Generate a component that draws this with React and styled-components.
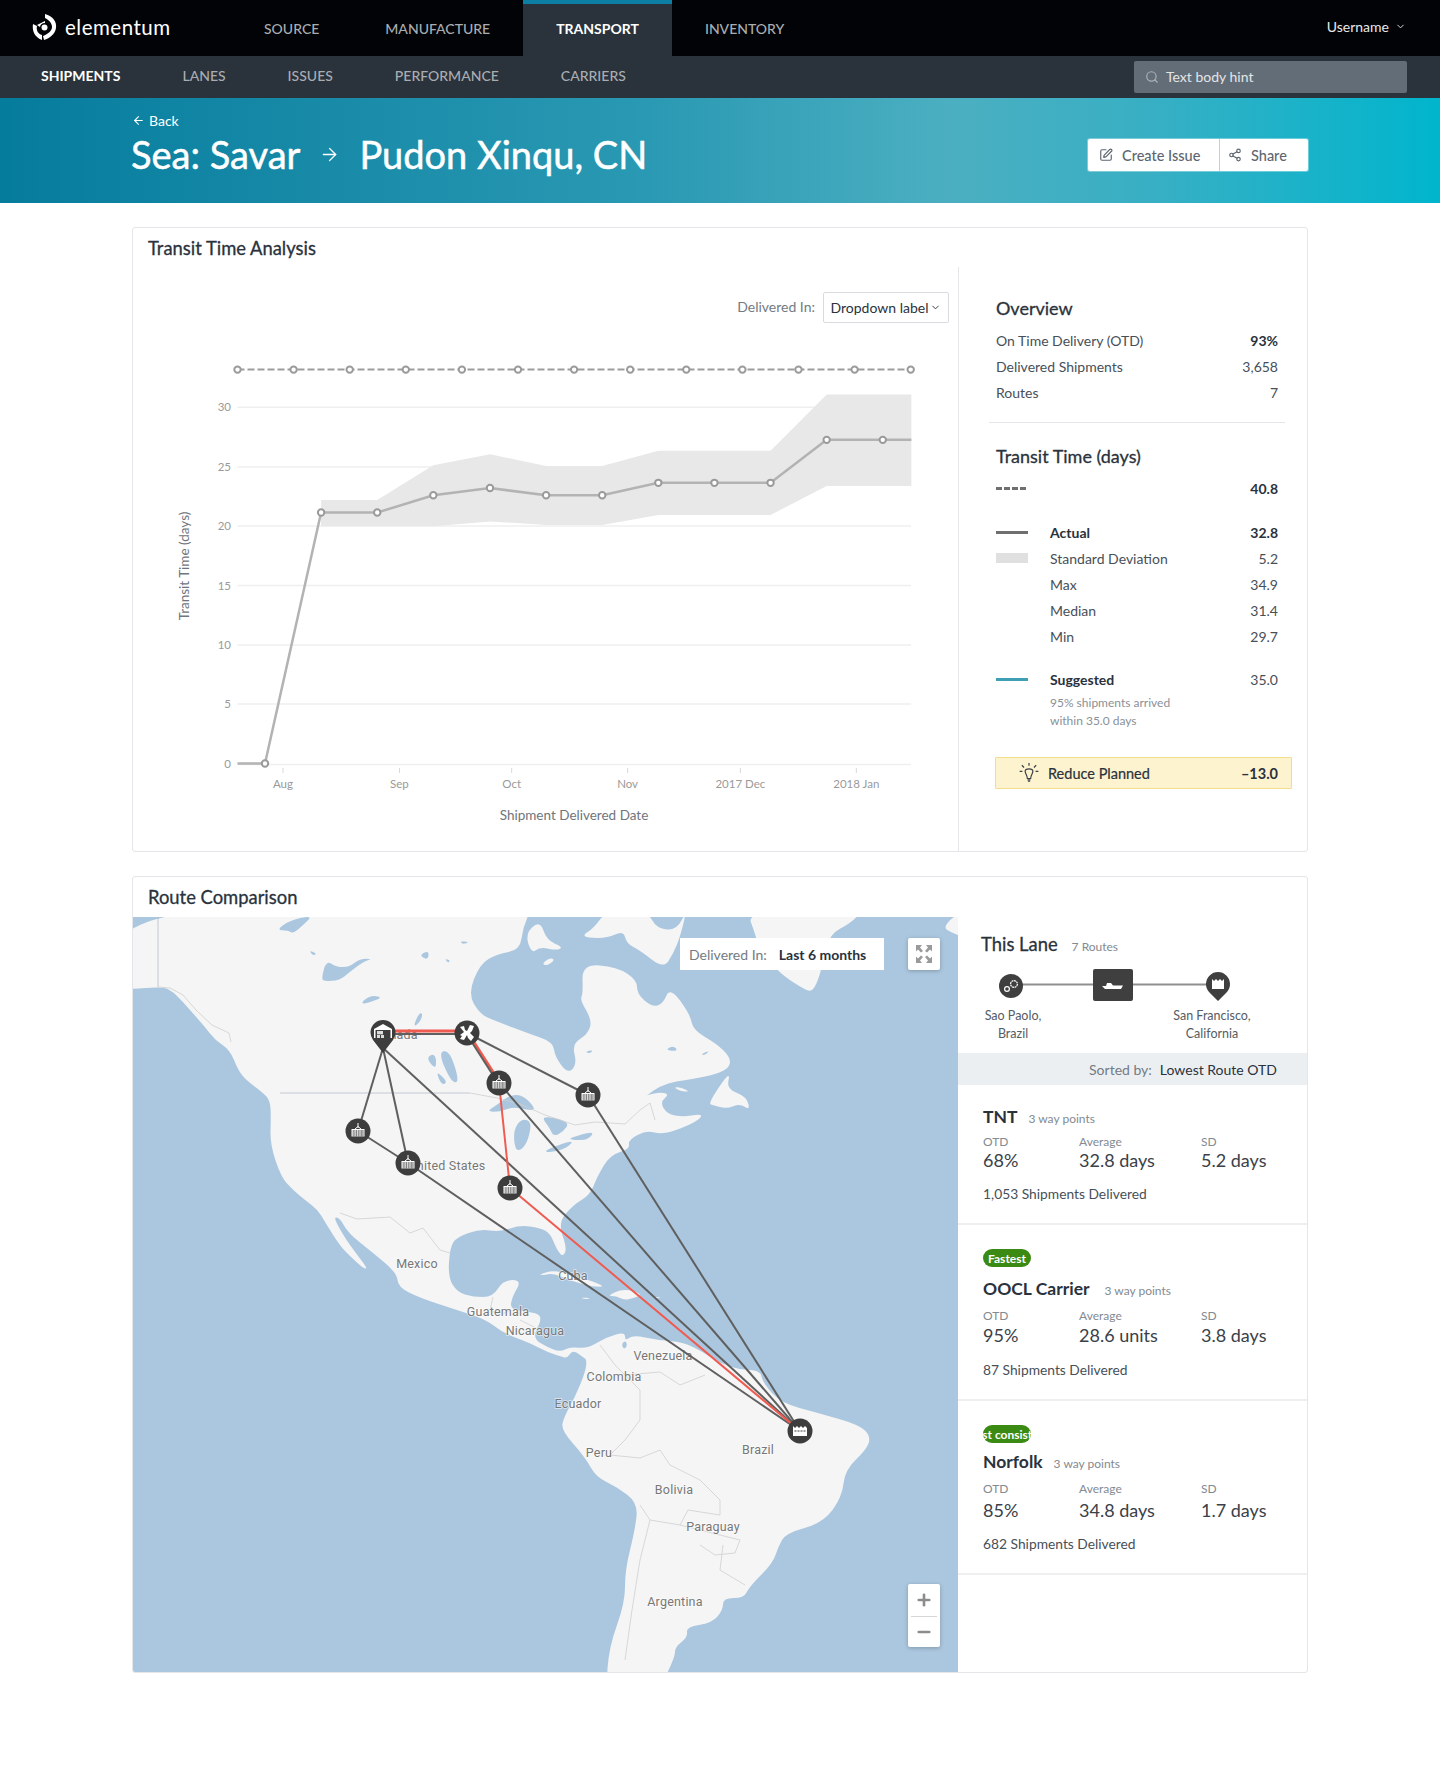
import styled, { createGlobalStyle } from "styled-components";
import {
  ArrowLeft,
  ArrowRight,
  ChevronDown,
  Search,
  SquarePen,
  Share2,
  Plus,
  Minus,
} from "lucide-react";

const GlobalStyle = createGlobalStyle`
  * { box-sizing: border-box; }
  html, body { margin: 0; padding: 0; background: #fff; }
  body {
    font-family: "Lato", "Liberation Sans", sans-serif;
    color: #2a323c;
    min-height: 1765px;
  }
`;

// chart data is read off the picture, in page pixels
const chartX = (z) => 130 + z / 1.889;
const chartY = (z) => 225 + z / 2.49;
const toPoints = (list) => list.map(([x, y]) => `${chartX(x)},${chartY(y)}`).join(" ");

const dashedXs = Array.from({ length: 13 }, (_, i) => 237.5 + i * 56.1);
const gridLines = [
  { label: "30", y: 407.3 },
  { label: "25", y: 467 },
  { label: "20", y: 526 },
  { label: "15", y: 585.6 },
  { label: "10", y: 645 },
  { label: "5", y: 704 },
  { label: "0", y: 764.4 },
];
const areaTop = [[361,685],[467,685],[573,598],[680,571],[786,600],[892,600],[998,562],[1104,562],[1210,562],[1316,422],[1422,422],[1476,422]];
const areaBottom = [[1476,650],[1422,650],[1316,650],[1210,722],[1104,722],[998,722],[892,747],[786,747],[680,738],[573,750],[467,750],[361,750]];
const actualLine = [[203,1341],[255,1341],[361,716],[467,716],[573,673],[680,655],[786,673],[892,673],[998,642],[1104,642],[1210,642],[1316,535],[1422,535],[1476,535]];
const months = [
  { label: "Aug", z: 289 },
  { label: "Sep", z: 509 },
  { label: "Oct", z: 721 },
  { label: "Nov", z: 940 },
  { label: "2017 Dec", z: 1153 },
  { label: "2018 Jan", z: 1372 },
];

const mainLand = "120,989 133,989 158,987 170,989 183,1002 190,1010 205,1027 215,1040 230,1050 238,1070 246,1080 262,1092 270,1100 271,1117 270,1144 281,1177 293,1190 305,1200 318,1210 325,1222 340,1246 352,1258 363,1268 368,1269 355,1252 345,1238 333,1217 340,1218 348,1233 372,1252 397,1273 398,1287 420,1298 457,1310 487,1320 503,1333 530,1343 547,1352 563,1357 567,1358 573,1350 583,1357 587,1360 585,1373 575,1397 564,1417 561,1430 585,1457 596,1477 617,1487 638,1503 635,1530 625,1570 625,1603 609,1647 606,1690 659,1690 675,1657 675,1647 688,1637 686,1627 712,1623 723,1610 723,1598 744,1598 749,1587 773,1563 778,1547 786,1533 823,1523 842,1497 845,1470 866,1450 871,1437 860,1425 818,1413 781,1403 763,1383 760,1370 740,1370 720,1363 703,1352 683,1342 657,1340 633,1335 625,1341 625,1332 607,1337 590,1347 580,1348 570,1347 560,1352 547,1347 532,1338 543,1317 533,1312 510,1310 512,1297 522,1280 503,1280 493,1297 473,1297 457,1292 448,1277 450,1247 457,1237 480,1229 500,1232 520,1225 540,1228 550,1233 557,1250 563,1257 567,1248 558,1223 573,1205 590,1195 597,1177 610,1155 630,1149 628,1140 647,1130 662,1135 690,1125 702,1117 700,1114 683,1117 667,1114 660,1102 670,1094 657,1092 637,1099 630,1110 660,1084 693,1079 717,1074 730,1067 730,1057 717,1044 693,1030 690,1014 670,987 663,1004 652,1007 637,994 637,980 617,967 582,964 583,994 580,1000 592,1020 588,1034 572,1044 577,1064 568,1074 555,1057 553,1042 530,1034 493,1020 480,1014 468,994 480,964 497,954 520,950 523,927 533,905 120,905"
  .split(" ")
  .map((pair) => pair.split(",").map(Number));

// [origin x, origin y, outline at 3x], taken from crops of the map
const shift = (ox, oy, list) => list.map(([x, y]) => [ox + x / 3, oy + y / 3]);
const middle = (a, b) => `${(a[0] + b[0]) / 2},${(a[1] + b[1]) / 2}`;
// rounds a coarse outline so coasts do not look like cut paper
const smooth = (list) => {
  const last = list.length - 1;
  let d = `M${middle(list[last], list[0])}`;
  list.forEach((point, i) => {
    d += ` Q${point[0]},${point[1]} ${middle(point, list[i === last ? 0 : i + 1])}`;
  });
  return `${d} Z`;
};
const islands = [
  [460, 917, [[195,50],[240,10],[260,70],[310,90],[290,100],[240,90],[215,110]]],
  [460, 917, [[360,60],[400,35],[440,-20],[560,-20],[590,35],[650,40],[680,-20],[660,60],[640,110],[610,155],[540,100],[500,80],[490,40],[440,65]]],
  [460, 917, [[860,-20],[885,50],[900,100],[960,170],[1030,215],[1055,225],[1075,190],[1090,130],[1110,50],[1170,20],[1210,-20]]],
  [460, 917, [[1450,30],[1490,-10],[1520,0],[1510,60],[1470,45]]],
  [460, 917, [[745,560],[790,490],[810,470],[800,515],[860,540],[870,580],[840,560],[800,575],[760,565]]],
  [460, 917, [[640,510],[665,512],[690,525],[660,522]]],
  [460, 917, [[245,140],[270,122],[285,128],[262,146]]],
  [340, 1170, [[595,315],[640,300],[690,315],[760,335],[795,350],[760,350],[700,335],[640,310],[610,315]]],
  [340, 1170, [[800,378],[850,355],[910,372],[880,385],[850,390],[830,378]]],
  [340, 1170, [[720,382],[755,385],[735,388]]],
  [340, 1170, [[945,380],[965,383],[950,385]]],
];
const lakes = [
  [133, 917, [[430,40],[470,10],[540,-5],[510,25],[480,50],[465,40]]],
  [133, 917, [[565,185],[580,130],[610,150],[650,150],[680,125],[720,125],[690,135],[650,165],[620,190],[575,193]]],
  [133, 917, [[680,262],[710,235],[750,240],[715,255]]],
  [133, 917, [[840,330],[858,288],[870,290],[860,318]]],
  [133, 917, [[915,405],[950,400],[980,495],[955,497]]],
  [133, 917, [[878,422],[908,408],[910,460]]],
  [133, 917, [[908,460],[945,495],[925,505]]],
  [133, 917, [[858,115],[888,100],[885,130]]],
  [133, 917, [[528,100],[552,110],[540,116]]],
  [133, 917, [[980,72],[1010,75],[990,82]]],
  [133, 917, [[935,125],[952,130],[945,138]]],
  [340, 1000, [[440,335],[470,315],[510,285],[550,285],[590,330],[560,330],[520,320],[480,335]]],
  [340, 1000, [[520,390],[545,355],[575,365],[565,420],[545,450],[525,450]]],
  [340, 1000, [[600,345],[690,365],[670,395],[640,410],[630,385]]],
  [340, 1000, [[610,452],[705,418],[680,445],[630,458]]],
  [340, 1000, [[685,415],[765,392],[745,420],[700,420]]],
  [460, 917, [[375,405],[400,398],[390,410]]],
  [460, 917, [[615,400],[640,385],[655,402]]],
  [460, 917, [[722,412],[750,400],[735,415]]],
  [340, 1170, [[845,520],[858,512],[862,530],[850,538]]],
  [130, 1270, [[1078,403],[1088,408],[1080,412]]],
  [130, 1270, [[952,635],[968,645],[960,655]]],
];
const borders = [
  { points: "158,917 158,987", strong: true },
  { points: "158,987 170,988 183,995 196,1010 212,1025 229,1033 231,1042" },
  { points: "280,1093 470,1093", strong: true },
  { points: "470,1093 497,1098 520,1104" },
  { points: "520,1104 545,1115 575,1125 595,1122 625,1124 640,1110 650,1103 655,1120" },
  { points: "340,1213 357,1219 390,1217 410,1233 423,1228 440,1250 450,1253" },
  { points: "493,1297 490,1310 500,1315 510,1310" },
  { points: "520,1320 540,1330" },
  { points: "600,1345 615,1365 625,1375 640,1390 640,1420 625,1440 610,1455 640,1458" },
  { points: "625,1375 660,1372 680,1385 705,1375" },
  { points: "640,1458 660,1450 670,1465 700,1480 720,1500 720,1515 688,1510 680,1525" },
  { points: "640,1505 650,1520 680,1525 700,1530 740,1540 735,1553 715,1555 700,1545" },
  { points: "650,1520 640,1560 632,1610 625,1660" },
  { points: "723,1545 720,1570 745,1585" },
];
const mapLabels = [
  { text: "Canada", x: 396, y: 1035 },
  { text: "United States", x: 447, y: 1166 },
  { text: "Mexico", x: 417, y: 1264 },
  { text: "Cuba", x: 573, y: 1276 },
  { text: "Guatemala", x: 498, y: 1312 },
  { text: "Nicaragua", x: 535, y: 1331 },
  { text: "Venezuela", x: 663, y: 1356 },
  { text: "Colombia", x: 614, y: 1377 },
  { text: "Ecuador", x: 578, y: 1404 },
  { text: "Peru", x: 599, y: 1453 },
  { text: "Brazil", x: 758, y: 1450 },
  { text: "Bolivia", x: 674, y: 1490 },
  { text: "Paraguay", x: 713, y: 1527 },
  { text: "Argentina", x: 675, y: 1602 },
];
const hub = { x: 467, y: 1033 };
const pinTip = { x: 383, y: 1048 };
const stopA = { x: 499, y: 1083 };
const stopB = { x: 588, y: 1095 };
const stopC = { x: 358, y: 1131 };
const stopD = { x: 408, y: 1163 };
const stopE = { x: 510, y: 1188 };
const plant = { x: 800, y: 1431 };
const greyRoutes = [
  [pinTip, stopC],
  [pinTip, stopD],
  [stopC, stopD],
  [stopD, plant],
  [pinTip, plant],
  [hub, stopB],
  [stopA, plant],
  [stopB, plant],
];
const redRoutes = [
  [stopA, stopE],
  [stopE, plant],
];

const routes = [
  {
    name: "TNT",
    points: "3 way points",
    otd: "68%",
    average: "32.8 days",
    sd: "5.2 days",
    delivered: "1,053 Shipments Delivered",
    top: 22,
    hintGap: 11,
    statsGap: 6,
    valueRow: 21,
    deliveredGap: 14,
  },
  {
    name: "OOCL Carrier",
    points: "3 way points",
    badge: "Fastest",
    otd: "95%",
    average: "28.6 units",
    sd: "3.8 days",
    delivered: "87 Shipments Delivered",
    top: 24,
    headGap: 12,
    hintGap: 15,
    statsGap: 8,
    valueRow: 24,
    deliveredGap: 13,
  },
  {
    name: "Norfolk",
    points: "3 way points",
    badge: "Most consistent",
    otd: "85%",
    average: "34.8 days",
    sd: "1.7 days",
    delivered: "682 Shipments Delivered",
    top: 24,
    headGap: 9,
    hintGap: 11,
    statsGap: 8,
    valueRow: 27,
    deliveredGap: 11,
  },
];

function Logo() {
  return (
    <svg width="25" height="28" viewBox="0 0 25 28">
      <path d="M13 1 C21 3 25 9 24 15 C23 21 18 25 12 27 L11 23 C16 21 20 18 20 14 C20 10 17 7 13 5 Z" fill="#fff" />
      <path d="M1 11 C0 17 2 24 10 27 L10 22 C6 21 4 17 5 13 Z" fill="#fff" />
      <path d="M5 12 L13 8 L13 10 C10 10 8 12 8 14 Z" fill="#fff" />
      <circle cx="12.5" cy="14.5" r="3" fill="#fff" />
    </svg>
  );
}

function ContainerGlyph() {
  return (
    <g fill="none">
      <path d="M0 -8 L0 -3 M-3 -2 L0 -4.5 L3 -2" stroke="#fff" strokeWidth="1" />
      <rect x="-6.5" y="-2" width="13" height="7.5" fill="#fff" />
      <path d="M-4.8 -1 V5.5 M-3.1 -1 V5.5 M-1.4 -1 V5.5 M0.3 -1 V5.5 M2 -1 V5.5 M3.7 -1 V5.5 M5 -1 V5.5" stroke="#3d3d3d" strokeWidth="0.7" />
    </g>
  );
}

function StopMarker({ x, y, children }) {
  return (
    <g transform={`translate(${x} ${y})`}>
      <circle r="12.5" fill="#3d3d3d" />
      {children}
    </g>
  );
}

function ExpandIcon() {
  return (
    <svg width="20" height="20" viewBox="0 0 20 20" fill="#9a9a9a">
      <path d="M2 1 H8 L6 3.5 L9 7 L7 8.5 L4 5.5 L2 7.5 Z" />
      <path d="M18 1 H12 L14 3.5 L11 7 L13 8.5 L16 5.5 L18 7.5 Z" />
      <path d="M2 19 H8 L6 16.5 L9 13 L7 11.5 L4 14.5 L2 12.5 Z" />
      <path d="M18 19 H12 L14 16.5 L11 13 L13 11.5 L16 14.5 L18 12.5 Z" />
    </svg>
  );
}

function BulbIcon() {
  return (
    <svg width="22" height="22" viewBox="0 0 20 20" fill="none" stroke="#3a4149" strokeWidth="1.1">
      <path d="M6.5 8.5 C6.5 5.5 13.5 5.5 13.5 8.5 C13.5 11 11.5 12 11.5 15 H8.5 C8.5 12 6.5 11 6.5 8.5 Z" />
      <path d="M9 17.5 H11 M8.7 16.3 H11.3 M10 1 V3.5 M3.5 3 L5.5 5 M16.5 3 L14.5 5 M1.5 8.5 H4 M16 8.5 H18.5" />
    </svg>
  );
}

function LaneDiagram() {
  return (
    <LaneSvg viewBox="0 0 349 40">
      <line x1="60" y1="18.5" x2="255" y2="18.5" stroke="#8f8f8f" strokeWidth="2" />
      <circle cx="53" cy="20" r="12" fill="#3f3f3f" />
      <g fill="none" stroke="#fff" strokeWidth="1.2">
        <circle cx="56" cy="18" r="3.4" strokeDasharray="2 0.6" />
        <circle cx="49" cy="23" r="2.4" />
      </g>
      <rect x="135" y="3" width="40" height="32" rx="2" fill="#3f3f3f" />
      <path d="M144 20 L148 20 L149 17 H153 L155 19.5 H165 L163 23 H147 Z" fill="#fff" />
      <path d="M260 35 L251 26 A12 12 0 1 1 269 26 Z" fill="#3f3f3f" />
      <path d="M254 13 L256 15 L258 13 L260 15 L262 13 L264 15 L266 13 V23 H254 Z" fill="#fff" />
    </LaneSvg>
  );
}

function TransitChart() {
  return (
    <ChartSvg viewBox="133 330 825 520">
      {gridLines.map((line) => (
        <g key={line.label}>
          <line x1="237.5" x2="911" y1={line.y} y2={line.y} stroke="#efefef" strokeWidth="1.5" />
          <AxisText x="231" y={line.y + 4} textAnchor="end">{line.label}</AxisText>
        </g>
      ))}
      <polygon points={toPoints([...areaTop, ...areaBottom])} fill="#e8e8e8" />
      <polyline points={`${dashedXs[0]},369.6 ${dashedXs[12]},369.6`} fill="none" stroke="#9d9d9d" strokeWidth="2" strokeDasharray="7 3" />
      {dashedXs.map((x) => (
        <circle key={x} cx={x} cy="369.6" r="3.2" fill="#fff" stroke="#9a9a9a" strokeWidth="2" />
      ))}
      <polyline points={toPoints(actualLine)} fill="none" stroke="#b3b3b3" strokeWidth="2.5" />
      {actualLine.slice(1, 13).map(([x, y]) => (
        <circle key={x} cx={chartX(x)} cy={chartY(y)} r="3.2" fill="#fff" stroke="#9a9a9a" strokeWidth="2" />
      ))}
      {months.map((month) => (
        <g key={month.label}>
          <line x1={chartX(month.z)} x2={chartX(month.z)} y1="768" y2="773" stroke="#d9d9d9" />
          <AxisText x={chartX(month.z)} y="788" textAnchor="middle">{month.label}</AxisText>
        </g>
      ))}
      <TitleText x="574" y="820" textAnchor="middle">Shipment Delivered Date</TitleText>
      <TitleText transform="translate(189 566) rotate(-90)" textAnchor="middle">Transit Time (days)</TitleText>
    </ChartSvg>
  );
}

function RouteMap() {
  return (
    <MapSvg viewBox="133 917 825 755">
      <rect x="133" y="917" width="825" height="755" fill="#abc7df" />
      <path d={smooth(mainLand)} fill="#f5f5f5" />
      {islands.map(([ox, oy, list], i) => (
        <path key={i} d={smooth(shift(ox, oy, list))} fill="#f5f5f5" />
      ))}
      {lakes.map(([ox, oy, list], i) => (
        <path key={i} d={smooth(shift(ox, oy, list))} fill="#abc7df" />
      ))}
      {borders.map((border, i) => (
        <polyline key={i} points={border.points} fill="none" stroke={border.strong ? "#b5bcc6" : "#cfcfcf"} strokeWidth="0.8" />
      ))}
      {mapLabels.map((label) => (
        <MapText key={label.text} x={label.x} y={label.y + 4} textAnchor="middle">{label.text}</MapText>
      ))}
      <line x1="383" y1="1031" x2="467" y2="1031" stroke="#ef5b50" strokeWidth="3" />
      <line x1="383" y1="1034" x2="467" y2="1034" stroke="#5f5f5f" strokeWidth="2" />
      <line x1={hub.x + 1} y1={hub.y} x2={stopA.x + 1} y2={stopA.y} stroke="#ef5b50" strokeWidth="3" />
      <line x1={hub.x - 1} y1={hub.y} x2={stopA.x - 1} y2={stopA.y} stroke="#5f5f5f" strokeWidth="2" />
      {greyRoutes.map(([from, to], i) => (
        <line key={i} x1={from.x} y1={from.y} x2={to.x} y2={to.y} stroke="#5f5f5f" strokeWidth="2" />
      ))}
      {redRoutes.map(([from, to], i) => (
        <line key={i} x1={from.x} y1={from.y} x2={to.x} y2={to.y} stroke="#ef5b50" strokeWidth="2" />
      ))}
      <g transform="translate(383 1032)">
        <path d="M0 21 L-10 8 A12.5 12.5 0 1 1 10 8 Z" fill="#3d3d3d" />
        <path d="M-9 -3 L0 -8 L9 -3 V6 H7.5 V-2 H-7.5 V6 H-9 Z" fill="#fff" />
        <rect x="-6" y="-1" width="6" height="3.4" fill="#dcdcdc" />
        <rect x="-6" y="3" width="3" height="3" fill="#dcdcdc" />
        <rect x="-2" y="3" width="3" height="3" fill="#dcdcdc" />
      </g>
      <StopMarker x={hub.x} y={hub.y}>
        <path d="M-7 -6 L-3 -7 L-2 -3 L0 -2 L3 -8 L7 -7 L5 -2 L3 0 L7 4 L4 8 L1 5 L0 2 L-3 7 L-7 6 L-5 3 L-7 2 L-3 -1 Z" fill="#fff" />
      </StopMarker>
      {[stopA, stopB, stopC, stopD, stopE].map((stop) => (
        <StopMarker key={stop.x} x={stop.x} y={stop.y}>
          <ContainerGlyph />
        </StopMarker>
      ))}
      <StopMarker x={plant.x} y={plant.y}>
        <path d="M-7 -5 L-5 -3 L-3 -5 L-1 -3 L1 -5 L3 -3 L5 -5 L7 -3 V5 H-7 Z" fill="#fff" />
        <path d="M-5.5 0 H5.5" stroke="#3d3d3d" strokeWidth="1.2" strokeDasharray="2 1" />
      </StopMarker>
    </MapSvg>
  );
}

function StatRow({ label, value, strongValue, strongLabel }) {
  return (
    <Row>
      <RowLabel $strong={strongLabel}>{label}</RowLabel>
      <RowValue $strong={strongValue}>{value}</RowValue>
    </Row>
  );
}

function LegendRow({ mark, label, value, strong, strongValue }) {
  return (
    <Row>
      <LegendMark>{mark}</LegendMark>
      <RowLabel $strong={strong}>{label}</RowLabel>
      <RowValue $strong={strongValue}>{value}</RowValue>
    </Row>
  );
}

function RouteCard({ route }) {
  return (
    <RouteItem $top={route.top}>
      {route.badge && (
        <Badge>
          <span>{route.badge}</span>
        </Badge>
      )}
      <RouteHead $top={route.headGap} $gap={route.hintGap}>
        <RouteName>{route.name}</RouteName>
        <RouteHint>{route.points}</RouteHint>
      </RouteHead>
      <RouteStats $top={route.statsGap} $valueRow={route.valueRow}>
        <StatLabel>OTD</StatLabel>
        <StatLabel>Average</StatLabel>
        <StatLabel>SD</StatLabel>
        <StatValue>{route.otd}</StatValue>
        <StatValue>{route.average}</StatValue>
        <StatValue>{route.sd}</StatValue>
      </RouteStats>
      <Delivered $top={route.deliveredGap}>{route.delivered}</Delivered>
    </RouteItem>
  );
}

export default function App() {
  return (
    <>
      <GlobalStyle />
      <TopBar>
        <Brand>
          <Logo />
          <BrandName>elementum</BrandName>
        </Brand>
        <TopNav>
          <TopLink>SOURCE</TopLink>
          <TopLink>MANUFACTURE</TopLink>
          <TopLink $active>TRANSPORT</TopLink>
          <TopLink>INVENTORY</TopLink>
        </TopNav>
        <UserMenu>
          Username <ChevronDown size={11} />
        </UserMenu>
      </TopBar>
      <SubBar>
        <SubLink $active>SHIPMENTS</SubLink>
        <SubLink>LANES</SubLink>
        <SubLink>ISSUES</SubLink>
        <SubLink>PERFORMANCE</SubLink>
        <SubLink>CARRIERS</SubLink>
        <SearchBox>
          <Search size={14} color="#aab1b8" />
          Text body hint
        </SearchBox>
      </SubBar>
      <Hero>
        <div>
          <BackLink>
            <ArrowLeft size={13} /> Back
          </BackLink>
          <HeroTitle>
            Sea: Savar
            <ArrowRight size={21} strokeWidth={1.6} />
            Pudon Xinqu, CN
          </HeroTitle>
        </div>
        <ButtonGroup>
          <HeroButton $width={131} $inset={11}>
            <SquarePen size={14} /> Create Issue
          </HeroButton>
          <HeroButton $width={89} $inset={8}>
            <Share2 size={14} /> Share
          </HeroButton>
        </ButtonGroup>
      </Hero>
      <Main>
        <Card>
          <CardTitle>Transit Time Analysis</CardTitle>
          <AnalysisBody>
            <ChartPane>
              <FilterRow>
                <FilterLabel $inRow>Delivered In:</FilterLabel>
                <Dropdown>
                  Dropdown label <ChevronDown size={11} />
                </Dropdown>
              </FilterRow>
              <TransitChart />
            </ChartPane>
            <SummaryPane>
              <SummaryHeading>Overview</SummaryHeading>
              <RowGroup $top={9}>
                <StatRow label="On Time Delivery (OTD)" value="93%" strongValue />
                <StatRow label="Delivered Shipments" value="3,658" />
                <StatRow label="Routes" value="7" />
              </RowGroup>
              <SummaryDivider />
              <SummaryHeading $top={23}>Transit Time (days)</SummaryHeading>
              <RowGroup $top={9}>
                <Row>
                  <DashMark />
                  <RowValue $strong>40.8</RowValue>
                </Row>
              </RowGroup>
              <RowGroup $top={18}>
                <LegendRow mark={<LineMark $color="#6f6f6f" />} label="Actual" value="32.8" strong strongValue />
                <LegendRow mark={<BandMark />} label="Standard Deviation" value="5.2" />
                <LegendRow label="Max" value="34.9" />
                <LegendRow label="Median" value="31.4" />
                <LegendRow label="Min" value="29.7" />
              </RowGroup>
              <RowGroup $top={17}>
                <LegendRow mark={<LineMark $color="#3f9fb4" />} label="Suggested" value="35.0" strong />
              </RowGroup>
              <SuggestedNote>
                95% shipments arrived
                <br />
                within 35.0 days
              </SuggestedNote>
              <Callout>
                <BulbIcon />
                <CalloutText>Reduce Planned</CalloutText>
                <RowValue $strong>–13.0</RowValue>
              </Callout>
            </SummaryPane>
          </AnalysisBody>
        </Card>
        <Card>
          <CardTitle $tall>Route Comparison</CardTitle>
          <RouteBody>
            <MapPane>
              <RouteMap />
              <MapFilter>
                <FilterLabel>Delivered In:</FilterLabel>
                <MapFilterValue>Last 6 months</MapFilterValue>
              </MapFilter>
              <ExpandButton>
                <ExpandIcon />
              </ExpandButton>
              <ZoomControl>
                <ZoomButton>
                  <Plus size={18} strokeWidth={3.5} color="#8c8c8c" />
                </ZoomButton>
                <ZoomButton>
                  <Minus size={18} strokeWidth={3.5} color="#8c8c8c" />
                </ZoomButton>
              </ZoomControl>
            </MapPane>
            <RoutePane>
              <LaneHead>
                <LaneTitle>This Lane</LaneTitle>
                <RouteHint>7 Routes</RouteHint>
              </LaneHead>
              <LaneDiagram />
              <LaneStops>
                <LaneStop $width={100}>
                  Sao Paolo,
                  <br />
                  Brazil
                </LaneStop>
                <LaneStop $width={140}>
                  San Francisco,
                  <br />
                  California
                </LaneStop>
              </LaneStops>
              <SortBar>
                <FilterLabel>Sorted by:</FilterLabel>
                <span>Lowest Route OTD</span>
              </SortBar>
              {routes.map((route) => (
                <RouteCard key={route.name} route={route} />
              ))}
            </RoutePane>
          </RouteBody>
        </Card>
      </Main>
    </>
  );
}

const TopBar = styled.header`
  height: 56px;
  background: #020306;
  display: flex;
  align-items: center;
  color: #fff;
`;

const Brand = styled.div`
  width: 231px;
  padding: 0 0 2px 32px;
  display: flex;
  align-items: center;
  gap: 8px;
`;

const BrandName = styled.span`
  font-size: 20.5px;
  letter-spacing: 0.5px;
`;

const TopNav = styled.nav`
  display: flex;
  height: 100%;
  align-self: stretch;
`;

const TopLink = styled.a`
  display: flex;
  align-items: center;
  padding: 0 33px;
  font-size: 14px;
  font-weight: ${(p) => (p.$active ? 700 : 500)};
  color: ${(p) => (p.$active ? "#fff" : "#a9adb1")};
  background: ${(p) => (p.$active ? "#2a323c" : "transparent")};
  border-top: 4px solid ${(p) => (p.$active ? "#0d7fa5" : "transparent")};
  border-bottom: 4px solid transparent;
`;

const UserMenu = styled.div`
  margin-left: auto;
  margin-right: 34px;
  padding-bottom: 4px;
  font-size: 14px;
  color: #e8e8e8;
  display: flex;
  align-items: center;
  gap: 6px;
`;

const SubBar = styled.nav`
  height: 42px;
  background: #2a323c;
  display: flex;
  align-items: center;
  padding-left: 41px;
  gap: 62px;
`;

const SubLink = styled.a`
  font-size: 14px;
  padding-bottom: 3px;
  font-weight: ${(p) => (p.$active ? 700 : 500)};
  color: ${(p) => (p.$active ? "#fff" : "#a9adb1")};
`;

const SearchBox = styled.div`
  margin-left: auto;
  margin-right: 33px;
  width: 273px;
  height: 32px;
  border-radius: 2px;
  background: #636d77;
  color: #e3e5e7;
  font-size: 14px;
  display: flex;
  align-items: center;
  gap: 7px;
  padding: 0 0 1px 11px;
`;

const Hero = styled.section`
  height: 105px;
  background: linear-gradient(90deg, #067c9d 0%, #2a99b3 45%, #4bafc1 66%, #38afc4 80%, #00b5cd 100%);
  padding: 14px 132px 0 132px;
  display: flex;
  justify-content: space-between;
  color: #fff;
`;

const BackLink = styled.div`
  display: flex;
  align-items: center;
  gap: 4px;
  font-size: 14px;
  height: 16px;
`;

const HeroTitle = styled.h1`
  margin: 4px 0 0 -1px;
  font-size: 38px;
  line-height: 44px;
  font-weight: 400;
  -webkit-text-stroke: 0.5px currentColor;
  display: flex;
  align-items: center;
  gap: 19px;
`;

const ButtonGroup = styled.div`
  display: flex;
  height: 32px;
  margin-top: 27px;
  background: #fff;
  border-radius: 2px;
  box-shadow: 0 0 0 1px rgba(255, 255, 255, 0.35);
`;

const HeroButton = styled.button`
  width: ${(p) => p.$width}px;
  border: 0;
  background: none;
  display: flex;
  align-items: center;
  gap: 9px;
  padding: 0 0 0 ${(p) => p.$inset}px;
  font: 500 14.5px "Lato", "Liberation Sans", sans-serif;
  color: #5d6670;
  & + & {
    border-left: 1px solid #c9ced3;
  }
`;

const Main = styled.main`
  padding: 24px 132px 0;
  display: flex;
  flex-direction: column;
  gap: 24px;
`;

const Card = styled.section`
  width: 1176px;
  border: 1px solid #e4e6e9;
  border-radius: 3px;
  background: #fff;
  overflow: hidden;
`;

const CardTitle = styled.h2`
  margin: 0;
  height: ${(p) => (p.$tall ? 40 : 39)}px;
  padding: 0 15px;
  display: flex;
  align-items: center;
  font-size: 18.4px;
  font-weight: 400;
  -webkit-text-stroke: 0.3px currentColor;
`;

const AnalysisBody = styled.div`
  display: grid;
  grid-template-columns: 825px 349px;
  height: 584px;
`;

const ChartPane = styled.div`
  display: flex;
  flex-direction: column;
`;

const FilterRow = styled.div`
  height: 63px;
  padding: 25px 9px 0 0;
  display: flex;
  justify-content: flex-end;
  align-items: flex-start;
  gap: 8px;
`;

const FilterLabel = styled.span`
  color: #737b84;
  font-size: 14px;
  line-height: ${(p) => (p.$inRow ? "29px" : "normal")};
`;

const Dropdown = styled.div`
  width: 126px;
  height: 31px;
  border: 1px solid #d9dcdf;
  border-radius: 2px;
  display: flex;
  align-items: center;
  justify-content: center;
  gap: 2px;
  font-size: 14px;
`;

const ChartSvg = styled.svg`
  display: block;
  width: 825px;
  height: 520px;
`;

const AxisText = styled.text`
  font-size: 11.5px;
  fill: #9a9a9a;
`;

const TitleText = styled.text`
  font-size: 13.5px;
  fill: #6f757c;
`;

const SummaryPane = styled.aside`
  border-left: 1px solid #e4e6e9;
  padding: 31px 29px 0 37px;
`;

const SummaryHeading = styled.h3`
  margin: ${(p) => p.$top || 0}px 0 0;
  height: 20px;
  line-height: 20px;
  font-size: 18px;
  font-weight: 400;
  -webkit-text-stroke: 0.3px currentColor;
`;

const RowGroup = styled.div`
  margin-top: ${(p) => p.$top}px;
`;

const Row = styled.div`
  height: 26px;
  display: flex;
  align-items: center;
  font-size: 14px;
`;

const RowLabel = styled.span`
  font-weight: ${(p) => (p.$strong ? 700 : 400)};
  color: ${(p) => (p.$strong ? "#2a323c" : "#474f58")};
`;

const RowValue = styled.span`
  margin-left: auto;
  font-weight: ${(p) => (p.$strong ? 700 : 400)};
  color: ${(p) => (p.$strong ? "#2a323c" : "#474f58")};
`;

const LegendMark = styled.span`
  width: 54px;
  flex: none;
  display: block;
`;

const LineMark = styled.span`
  display: block;
  width: 32px;
  height: 3px;
  background: ${(p) => p.$color};
`;

const BandMark = styled.span`
  display: block;
  width: 32px;
  height: 10px;
  background: #e0e0e0;
`;

const DashMark = styled.span`
  display: block;
  width: 31px;
  height: 3px;
  background: repeating-linear-gradient(90deg, #6f6f6f 0 6px, transparent 6px 8px);
`;

const SummaryDivider = styled.hr`
  margin: 16.5px -7px 0 -7px;
  border: 0;
  height: 1.5px;
  background: #e4e6e9;
`;

const SuggestedNote = styled.p`
  margin: 2px 0 0 54px;
  font-size: 12px;
  line-height: 18px;
  color: #8a9097;
`;

const Callout = styled.div`
  margin: 27px -14px 0 -1px;
  height: 32px;
  background: #fdf3cf;
  border: 1px solid #f2dd8c;
  border-radius: 1px;
  display: flex;
  align-items: center;
  font-size: 14.5px;
  padding: 0 13px 0 22px;
`;

const CalloutText = styled.span`
  margin-left: 8px;
  -webkit-text-stroke: 0.2px currentColor;
`;

const RouteBody = styled.div`
  display: grid;
  grid-template-columns: 825px 349px;
  height: 755px;
`;

const MapPane = styled.div`
  position: relative;
`;

const MapSvg = styled.svg`
  display: block;
  width: 825px;
  height: 755px;
`;

const MapText = styled.text`
  font-size: 12.5px;
  letter-spacing: 0.2px;
  font-family: "Roboto", sans-serif;
  fill: #777;
  stroke: rgba(255, 255, 255, 0.6);
  stroke-width: 1.5px;
  paint-order: stroke;
`;

const MapFilter = styled.div`
  position: absolute;
  left: 547px;
  top: 21px;
  width: 204px;
  height: 32px;
  background: #fff;
  display: flex;
  align-items: center;
  gap: 12px;
  padding-left: 9px;
`;

const MapFilterValue = styled.span`
  font-size: 14px;
  font-weight: 700;
`;

const ExpandButton = styled.div`
  position: absolute;
  left: 775px;
  top: 21px;
  width: 32px;
  height: 32px;
  background: #fff;
  border-radius: 2px;
  box-shadow: 0 1px 4px rgba(0, 0, 0, 0.25);
  display: flex;
  align-items: center;
  justify-content: center;
`;

const ZoomControl = styled.div`
  position: absolute;
  left: 775px;
  top: 667px;
  width: 32px;
  height: 63px;
  background: #fff;
  border-radius: 2px;
  box-shadow: 0 1px 4px rgba(0, 0, 0, 0.25);
  padding: 0 3px;
`;

const ZoomButton = styled.div`
  height: 31.5px;
  display: flex;
  align-items: center;
  justify-content: center;
  & + & {
    border-top: 1px solid #d6d6d6;
  }
`;

const RoutePane = styled.aside`
  display: flex;
  flex-direction: column;
`;

const LaneHead = styled.div`
  padding: 17px 0 0 23px;
  height: 49px;
  flex: none;
  display: flex;
  align-items: baseline;
  gap: 14px;
`;

const LaneTitle = styled.h3`
  margin: 0;
  font-size: 18.4px;
  line-height: 20px;
  font-weight: 400;
  -webkit-text-stroke: 0.3px currentColor;
`;

const LaneSvg = styled.svg`
  display: block;
  flex: none;
  width: 349px;
  height: 40px;
`;

const LaneStops = styled.div`
  margin-top: 1px;
  padding-left: 5px;
  display: flex;
  gap: 79px;
`;

const LaneStop = styled.div`
  width: ${(p) => p.$width}px;
  text-align: center;
  font-size: 12.5px;
  line-height: 18px;
  color: #555c64;
`;

const SortBar = styled.div`
  margin-top: 10px;
  height: 32px;
  flex: none;
  background: #eceff2;
  display: flex;
  align-items: center;
  justify-content: flex-end;
  gap: 8px;
  padding-right: 30px;
  font-size: 14px;
`;

const RouteItem = styled.article`
  padding: ${(p) => p.$top}px 22px 19px 25px;
  border-bottom: 2px solid #efefef;
`;

const Badge = styled.div`
  width: 48px;
  height: 18px;
  border-radius: 9px;
  background: #3b8a14;
  color: #fff;
  font-size: 12px;
  font-weight: 700;
  display: flex;
  align-items: center;
  justify-content: center;
  overflow: hidden;
  white-space: nowrap;
  span {
    flex: none;
  }
`;

const RouteHead = styled.div`
  margin-top: ${(p) => p.$top || 0}px;
  height: 20px;
  display: flex;
  align-items: baseline;
  gap: ${(p) => p.$gap}px;
`;

const RouteName = styled.h4`
  margin: 0;
  font-size: 17.5px;
  line-height: 20px;
  font-weight: 700;
`;

const RouteHint = styled.span`
  font-size: 12px;
  color: #848a91;
`;

const RouteStats = styled.div`
  margin-top: ${(p) => p.$top}px;
  display: grid;
  grid-template-columns: 96px 122px 1fr;
  grid-template-rows: 16px ${(p) => p.$valueRow}px;
  align-items: center;
`;

const StatLabel = styled.span`
  font-size: 12px;
  color: #848a91;
`;

const StatValue = styled.span`
  font-size: 18px;
  color: #3a4149;
`;

const Delivered = styled.div`
  margin-top: ${(p) => p.$top}px;
  font-size: 13.8px;
  line-height: 20px;
  color: #474f58;
`;
